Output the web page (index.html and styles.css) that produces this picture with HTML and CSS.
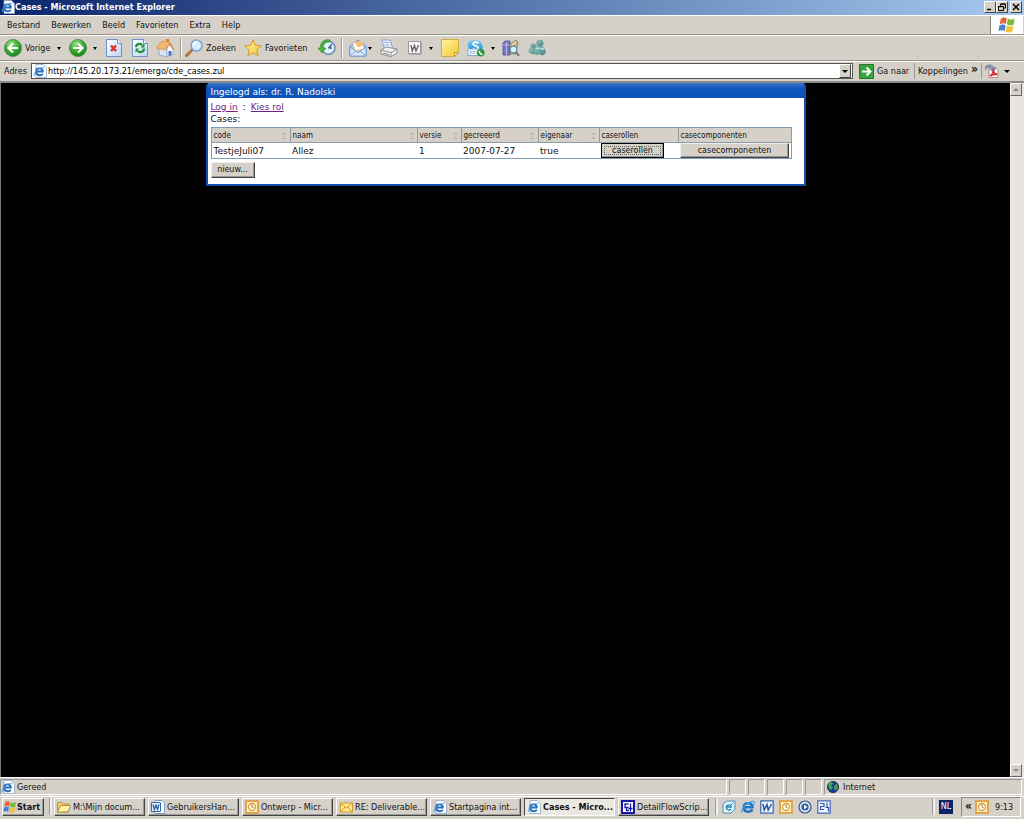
FILE: index.html
```html
<!DOCTYPE html>
<html lang="nl">
<head>
<meta charset="utf-8">
<title>Cases - Microsoft Internet Explorer</title>
<link rel="stylesheet" href="styles.css">
</head>
<body>
<svg class="sprite" aria-hidden="true">
  <defs>
    <radialGradient id="green" cx=".4" cy=".25" r=".8"><stop offset="0" stop-color="#9be08a"/><stop offset=".5" stop-color="#3fae35"/><stop offset="1" stop-color="#16801a"/></radialGradient>
    <linearGradient id="paper" x2="1" y2="1"><stop offset="0" stop-color="#fff"/><stop offset="1" stop-color="#b9d6f5"/></linearGradient>
    <linearGradient id="yellow" x2="1" y2="1"><stop offset="0" stop-color="#fff6a8"/><stop offset="1" stop-color="#f3c630"/></linearGradient>
    <linearGradient id="sky" x2="0" y2="1"><stop offset="0" stop-color="#7fd3f7"/><stop offset="1" stop-color="#1a86d0"/></linearGradient>
    <linearGradient id="teal" x2="1" y2="1"><stop offset="0" stop-color="#9fd0c0"/><stop offset="1" stop-color="#3d8085"/></linearGradient>
  </defs>
  <symbol id="back" viewBox="0 0 18 18"><circle cx="9" cy="9" r="8.5" fill="url(#green)" stroke="#2c7f2a" stroke-width=".7"/><path d="M14 9H5M9 4.5 4.5 9 9 13.500" fill="none" stroke="#fff" stroke-width="2.200"/></symbol>
  <symbol id="forward" viewBox="0 0 18 18"><circle cx="9" cy="9" r="8.500" fill="url(#green)" stroke="#2c7f2a" stroke-width=".7"/><path d="M4 9h9M9 4.500 13.500 9 9 13.500" fill="none" stroke="#fff" stroke-width="2.200"/></symbol>
  <symbol id="stop" viewBox="0 0 16 18"><path d="M.5.5h11l4 4v13H.5z" fill="url(#paper)" stroke="#6b94c4"/><path d="M11.500.5v4h4" fill="#fff" stroke="#6b94c4"/><path d="m5 6.500 5 5.500m0-5.500L5 12" stroke="#e0322a" stroke-width="2.500"/></symbol>
  <symbol id="refresh" viewBox="0 0 16 18"><path d="M.5.5h11l4 4v13H.5z" fill="url(#paper)" stroke="#6b94c4"/><path d="M11.500.5v4h4" fill="#fff" stroke="#6b94c4"/><path d="M4 8c0-3 4-4 6-2M12 9.500c0 3.500-4 4.500-6.500 2.500" fill="none" stroke="#1d9138" stroke-width="2.200"/><path d="M8.500 8.500h4V4zM7 9.500H3.500V14z" fill="#1d9138"/></symbol>
  <symbol id="home" viewBox="0 0 18 18"><path d="M3 8v8l8 2V8z" fill="#d9e5f5" stroke="#7e9cc6" stroke-width=".7"/><path d="m11 9 3-4 3 4v6l-6 3z" fill="#f8fbff" stroke="#7e9cc6" stroke-width=".7"/><path d="M12.500 12h3v4l-3 1.300z" fill="#4e72b4"/><path d="M0 9 6 2l8 1-5 8z" fill="#f3b671" stroke="#d08a3d" stroke-width=".7"/><path d="m14 3 4 7-1 .8-4-5z" fill="#d98a55"/><path d="M10 0h3v3l-3-.4z" fill="#d6863d"/></symbol>
  <symbol id="search" viewBox="0 0 18 18"><path d="m1.500 16.500 5.500-5.500" stroke="#9b6a37" stroke-width="3" stroke-linecap="round"/><path d="m1.500 16 5-5" stroke="#dda35c" stroke-width="1"/><circle cx="11.500" cy="6.500" r="5.500" fill="#d9efff" stroke="#7ca4d4" stroke-width="1.600"/><path d="M8 6c.5-2 2-3 4-3" fill="none" stroke="#fff" stroke-width="1.500"/></symbol>
  <symbol id="star" viewBox="0 0 18 18"><path d="m9 .8 2.300 5.500 6 .5-4.500 4 1.400 6L9 13.700 3.800 16.800l1.400-6-4.500-4 6-.5z" fill="url(#yellow)" stroke="#d49a20"/></symbol>
  <symbol id="history" viewBox="0 0 18 18"><circle cx="10.500" cy="8.800" r="6.500" fill="#e4f2fb" stroke="#7199bf" stroke-width="1.800"/><path d="M10.500 9 14 5M10.500 9H14" stroke="#355c86" stroke-width="1.300"/><path d="M12 1C5.500-.5 2 4 2.500 9H0l4 5 4-5H5.500C5 5 8 2 12 3z" fill="#49b53c" stroke="#258527" stroke-width=".6"/></symbol>
  <symbol id="mail" viewBox="0 0 18 18"><path d="M1 7 9 1l8 6v10H1z" fill="#a9cdf4" stroke="#6b95cc"/><path d="M3.500 4 13 2l2 8-9 2z" fill="#fffdf0" stroke="#d5a266" stroke-width=".6"/><circle cx="10" cy="5" r="3" fill="#f4bb73"/><path d="m1 8 8 6 8-6v9H1z" fill="#d8ebff" stroke="#6b95cc" stroke-width=".8"/><path d="m1 17 6-5m10 5-6-5" stroke="#6b95cc" stroke-width=".8"/></symbol>
  <symbol id="print" viewBox="0 0 18 18"><path d="m4 9-2-8h8l3 9z" fill="#e4f0ff" stroke="#7695c5" stroke-width=".8"/><path d="M4 3.500h5M4.500 6h5" stroke="#9eb6dd"/><path d="m1 11 5-3 11 2v4l-6 3.500L1 15z" fill="#efefed" stroke="#77787c" stroke-width=".8"/><path d="m1 11 10 2.500 6-3.500M11 13.500v4M3 14l6 1.500" fill="none" stroke="#77787c" stroke-width=".8"/></symbol>
  <symbol id="edit" viewBox="0 0 14 14"><path d="M.5.5h12v12H.5z" fill="#fafafa" stroke="#999"/><path d="M1 13.500h12.500V1" fill="none" stroke="#aaa"/><path d="m3 4 1.300 6L6.500 4.500 8 10l2.500-6" fill="none" stroke="#666" stroke-width="1.400"/></symbol>
  <symbol id="note" viewBox="0 0 18 18"><path d="M.5.5h17v13l-4 4H.5z" fill="url(#yellow)" stroke="#d2ab39"/><path d="M17.500 13.500h-4v4z" fill="#fff5b0" stroke="#c99d2b"/></symbol>
  <symbol id="skype" viewBox="0 0 19 18"><path d="M4 1c3-1 10-1 12 4 1 3 1 5-1 8L3 10C0 8 0 3 4 1z" fill="url(#sky)"/><path d="M12 4C9 2 6 3 6.500 5s5 1.500 5.500 4-4 2.500-6 .5" fill="none" stroke="#fff" stroke-width="1.800"/><path d="M1 10h11v7H1z" fill="#f5faff" stroke="#76a4ca"/><path d="M3 12.500h7m-7 2h7" stroke="#819db5" stroke-dasharray="2 1"/><circle cx="14.500" cy="14" r="4" fill="#249734"/><path d="M13 12c0 2 1 3.500 3.500 4" stroke="#fff" stroke-width="1.500" fill="none"/></symbol>
  <symbol id="research" viewBox="0 0 18 18"><path d="m1 4 2-2h5v14H1z" fill="#7476c4" stroke="#484993" stroke-width=".7"/><path d="M4.500 3v13M1 6h7" stroke="#babaf0"/><path d="m8 5 6-4 2 2-2 12H8z" fill="#c5b786" stroke="#73704d" stroke-width=".7"/><path d="m10 6 4-3" stroke="#fff8cc"/><circle cx="11.500" cy="10.500" r="3.300" fill="#d8f4ff" stroke="#6a8fa3" stroke-width="1.200"/><path d="m14 13 3 4" stroke="#6d6d70" stroke-width="2"/></symbol>
  <symbol id="messenger" viewBox="0 0 19 18"><g fill="url(#teal)" stroke="#4d8a86" stroke-width=".5"><circle cx="5.500" cy="7" r="2.600"/><path d="M1 13c-.5-5 8-6 9 0-1 3-8 3-9 0z"/><circle cx="12.500" cy="4" r="3.500"/><path d="M6.500 14C6 6 10 6.500 12 8c2-1.500 6 0 6.500 6-2 4-6 2-6.500 1-1 1-4 2-5.500-1z"/></g><path d="M9 10c1-1.500 2.500-1 3 0m1.500 0c1-1 2.500-.5 3 1" stroke="#d4ebe8" fill="none" stroke-width="1.200"/></symbol>
  <symbol id="ie" viewBox="0 0 14 14"><path d="M3 .5h7.500l3 3v10H3z" fill="#fff" stroke="#8ea5c4" stroke-width=".8"/><path d="M9.800 9.700C8 12.500 3 11.500 3.100 7.500 3.200 3.500 9.700 3.200 9.800 7.500H4" fill="none" stroke="#246dba" stroke-width="1.900"/><path d="M1.500 12C0 9 6 3 11.500 3.200" fill="none" stroke="#4d9fe2" stroke-width=".9"/></symbol>
  <symbol id="globe-ie" viewBox="0 0 14 14"><path d="M11.500 9.500C9 13.500 2.500 12 2.700 7.200 3 2 11.300 2 11.500 7.200H4" fill="none" stroke="#1c77c9" stroke-width="2.500"/><path d="M1 13C-1 9 7 1 13 1.500c1 1 .5 2 0 3" fill="none" stroke="#4aa6e8" stroke-width="1.200"/></symbol>
  <symbol id="windows" viewBox="0 0 16 16"><path d="M2.500 2.500C4.500 1 6 1.200 7.800 2L7 7.200c-1.700-1-3.500-.8-5.500.3z" fill="#ea6134"/><path d="M8.800 2.500c2 1 3.800 1 6-.2l-.9 5.300c-2 1-4 1-6 0z" fill="#79ba3c"/><path d="M1.300 8.500c2-1.200 3.700-1.300 5.500-.3L6 13.300c-2-1-3.600-.8-5.500.3z" fill="#4682d2"/><path d="M7.700 8.700c2 1 4 1 6-.1l-.9 5.200c-2 1.200-4 1.100-6 .1z" fill="#f4c237"/></symbol>
  <symbol id="go" viewBox="0 0 15 15"><path d="M.5.5h14v14H.5z" fill="#36a43b" stroke="#28772d"/><path d="M3 7.500h8M7.500 3.500l4 4-4 4" fill="none" stroke="#fff" stroke-width="1.900"/></symbol>
  <symbol id="pdf" viewBox="0 0 14 14"><path d="M4 3h6l3 3v7.500H4z" fill="#fff" stroke="#a06a75" stroke-width=".7"/><path d="M0 3c3-3 7-3 9 1h2L8 8 4.500 5H6C4 3 2 3 0 6z" fill="#8a94b8" stroke="#5b6690" stroke-width=".5"/><path d="M5 12c3-2 4-5 3.500-6.500S7 9 12.500 10.500C9 10 7 10.500 5 12z" fill="none" stroke="#d12b36" stroke-width="1.600"/></symbol>
  <symbol id="folder" viewBox="0 0 14 14"><path d="M.5 3V12h11V4H6L4.500 2.500H1z" fill="#f5cf62" stroke="#b58f3b"/><path d="m.5 12 3-6.500h10L11 12z" fill="#fff0a4" stroke="#b58f3b"/></symbol>
  <symbol id="worddoc" viewBox="0 0 14 14"><path d="M4 .5h7l2.500 2.500v10.500H4z" fill="#fff" stroke="#7f9cc6"/><path d="M.5 2.500h9v9h-9z" fill="#e6effb" stroke="#3868aa"/><path d="m2 4.500 1.300 5L5 5l1.500 4.500 1.500-5" fill="none" stroke="#2157a4" stroke-width="1.200"/></symbol>
  <symbol id="word" viewBox="0 0 14 14"><path d="M.8.800h12.400v12.400H.8z" fill="#edf4ff" stroke="#3864aa" stroke-width="1.200"/><path d="m3 4 1.200 6L7 4.500 8.200 10 11.500 4" fill="none" stroke="#2555a4" stroke-width="1.500"/></symbol>
  <symbol id="outlook" viewBox="0 0 14 14"><path d="M1 1h12v12H1z" fill="#fff1c0" stroke="#e0a450" stroke-width="2"/><circle cx="7" cy="7" r="3.500" fill="#fffdf0" stroke="#d99a40" stroke-width="1.300"/><path d="M7 4.500V7l1.700 1" fill="none" stroke="#a56619"/></symbol>
  <symbol id="envelope" viewBox="0 0 14 14"><path d="M1.500 3h12v9h-12z" fill="#ffe98a" stroke="#cf9c29"/><path d="m1.500 3 6 5 6-5M2 12l4-5m7 5L9 7" fill="none" stroke="#cf9c29"/></symbol>
  <symbol id="flow" viewBox="0 0 14 14"><path d="M1 1h12v12H1z" fill="#fff" stroke="#1717aa" stroke-width="2"/><path d="M7.500 4H4v3.500h3.500M5.500 7.500V10.500H8M9.500 3.500v5M7.500 8.500h4M9.500 8.500v3" fill="none" stroke="#1717aa" stroke-width="1.300"/></symbol>
  <symbol id="desktop" viewBox="0 0 14 14"><path d="m1 4 4-3h8v8l-4 4H1z" fill="#e8f5fc" stroke="#468fb5"/><path d="M9 9C7 11 4 9.500 4.300 7 4.600 4 9.500 4.300 9.300 7H5" fill="none" stroke="#2d86b8" stroke-width="1.400"/><path d="m8 6 3.500-3.500" stroke="#398ab1"/></symbol>
  <symbol id="media" viewBox="0 0 14 14"><circle cx="7" cy="7" r="6" fill="#d9e7f8" stroke="#36588d" stroke-width="1.200"/><circle cx="7" cy="7" r="3.600" fill="#385a94"/><path d="m6 4.800 3.500 2.200L6 9.200z" fill="#fff"/></symbol>
  <symbol id="visio" viewBox="0 0 14 14"><path d="M.8.800h12.400v12.400H.8z" fill="#eef3ff" stroke="#4766b3" stroke-width="1.200"/><path d="M3 3.500h4v3H3.500v3H7M10 2.500v5M8.500 7.500h3v4" fill="none" stroke="#3157ab" stroke-width="1.200"/></symbol>
  <symbol id="world" viewBox="0 0 12 12"><circle cx="6" cy="6" r="5.500" fill="#173e9b" stroke="#142b54"/><path d="M1.500 3C4 0 6 1 6 2.500L4 5l2 1-2 3C2 8 1 6 1.500 3zM7.500 4 10 3l1 4-2.500 3L7 7z" fill="#44a74f"/></symbol>
</svg>

<div class="desktop">
  <header class="titlebar">
    <svg class="icon14"><use href="#ie"/></svg>
    <h1>Cases - Microsoft Internet Explorer</h1>
    <div class="winbuttons">
      <button class="winbtn" aria-label="Minimaliseren"><svg viewBox="0 0 8 8"><path d="M1 6.500h4" stroke="#000" stroke-width="1.500"/></svg></button>
      <button class="winbtn" aria-label="Herstellen"><svg viewBox="0 0 8 8"><path d="M2.500 3V1h5v4h-2M.5 3.500h5v4h-5zM2.500 1.200h5M.5 3.700h5" fill="none" stroke="#000"/></svg></button>
      <button class="winbtn closebtn" aria-label="Sluiten"><svg viewBox="0 0 8 8"><path d="m1 1 6 6m0-6L1 7" stroke="#000" stroke-width="1.500"/></svg></button>
    </div>
  </header>

  <nav class="menubar">
    <button>Bestand</button><button>Bewerken</button><button>Beeld</button><button>Favorieten</button><button>Extra</button><button>Help</button>
    <span class="brand"><svg class="icon18"><use href="#windows"/></svg></span>
  </nav>

  <div class="toolbar">
    <button><svg class="icon18"><use href="#back"/></svg>Vorige</button>
    <button class="drop" aria-label="Vorige pagina's"></button>
    <button aria-label="Volgende"><svg class="icon18"><use href="#forward"/></svg></button>
    <button class="drop" aria-label="Volgende pagina's"></button>
    <button aria-label="Stoppen"><svg class="page"><use href="#stop"/></svg></button>
    <button aria-label="Vernieuwen"><svg class="page"><use href="#refresh"/></svg></button>
    <button aria-label="Startpagina"><svg class="icon18"><use href="#home"/></svg></button>
    <span class="sep"></span>
    <button><svg class="icon18"><use href="#search"/></svg>Zoeken</button>
    <button><svg class="icon18"><use href="#star"/></svg>Favorieten</button>
    <button aria-label="Geschiedenis"><svg class="icon18"><use href="#history"/></svg></button>
    <span class="sep"></span>
    <button aria-label="E-mail"><svg class="icon18"><use href="#mail"/></svg></button>
    <button class="drop" aria-label="E-mailopties"></button>
    <button aria-label="Afdrukken"><svg class="icon18"><use href="#print"/></svg></button>
    <button aria-label="Bewerken met Word"><svg class="icon14"><use href="#edit"/></svg></button>
    <button class="drop" aria-label="Bewerkopties"></button>
    <button aria-label="Discussiëren"><svg class="icon18"><use href="#note"/></svg></button>
    <button aria-label="Skype"><svg class="icon18"><use href="#skype"/></svg></button>
    <button class="drop" aria-label="Skype-opties"></button>
    <button aria-label="Onderzoek"><svg class="icon18"><use href="#research"/></svg></button>
    <button aria-label="Messenger"><svg class="icon18"><use href="#messenger"/></svg></button>
  </div>

  <div class="addressbar">
    <label for="address">Adres</label>
    <div class="address">
      <svg class="icon14"><use href="#ie"/></svg>
      <input id="address" type="text" value="http://145.20.173.21/emergo/cde_cases.zul">
      <button class="combo drop" aria-label="Adreslijst"></button>
    </div>
    <button class="go"><svg class="icon15"><use href="#go"/></svg>Ga naar</button>
    <button class="links">Koppelingen <b>»</b></button>
    <button class="pdf" aria-label="PDF"><svg class="icon14"><use href="#pdf"/></svg><span class="drop"></span></button>
  </div>

  <div class="viewport">
    <main class="page-area">
      <section class="window">
        <h2>Ingelogd als: dr. R. Nadolski</h2>
        <div class="window-body">
          <p><a href="#">Log in</a><span class="colon">:</span><a href="#">Kies rol</a></p>
          <p>Cases:</p>
          <table class="cases">
            <colgroup><col class="c-code"><col class="c-naam"><col class="c-versie"><col class="c-date"><col class="c-owner"><col class="c-roles"><col></colgroup>
            <thead><tr><th class="sort">code</th><th class="sort">naam</th><th class="sort">versie</th><th class="sort">gecreeerd</th><th class="sort">eigenaar</th><th>caserollen</th><th>casecomponenten</th></tr></thead>
            <tbody><tr><td>TestjeJuli07</td><td>Allez</td><td>1</td><td>2007-07-27</td><td>true</td><td><button class="btn roles">caserollen</button></td><td><button class="btn components">casecomponenten</button></td></tr></tbody>
          </table>
          <button class="btn new">nieuw...</button>
        </div>
      </section>
    </main>
    <div class="scrollbar"><button class="up" aria-label="Omhoog"></button><button class="down" aria-label="Omlaag"></button></div>
  </div>

  <footer class="statusbar">
    <div class="status-main"><svg class="icon14"><use href="#ie"/></svg>Gereed</div>
    <span class="cell"></span><span class="cell"></span><span class="cell"></span><span class="cell"></span><span class="cell"></span>
    <div class="zone"><svg class="icon12"><use href="#world"/></svg>Internet</div>
  </footer>

  <nav class="taskbar">
    <button class="task start"><svg class="icon14"><use href="#windows"/></svg>Start</button>
    <span class="grip"></span>
    <div class="tasks">
      <button class="task"><svg class="icon14"><use href="#folder"/></svg>M:\Mijn docum...</button>
      <button class="task"><svg class="icon14"><use href="#worddoc"/></svg>GebruikersHan...</button>
      <button class="task"><svg class="icon14"><use href="#outlook"/></svg>Ontwerp - Micr...</button>
      <button class="task"><svg class="icon14"><use href="#envelope"/></svg>RE: Deliverable...</button>
      <button class="task"><svg class="icon14"><use href="#ie"/></svg>Startpagina int...</button>
      <button class="task active"><svg class="icon14"><use href="#ie"/></svg>Cases - Micro...</button>
      <button class="task"><svg class="icon14"><use href="#flow"/></svg>DetailFlowScrip...</button>
    </div>
    <span class="grip"></span>
    <div class="quick">
      <svg class="icon14"><use href="#desktop"/></svg><svg class="icon14"><use href="#globe-ie"/></svg><svg class="icon14"><use href="#word"/></svg><svg class="icon14"><use href="#outlook"/></svg><svg class="icon14"><use href="#media"/></svg><svg class="icon14"><use href="#visio"/></svg>
    </div>
    <span class="grip tray-grip"></span>
    <span class="lang">NL</span>
    <div class="tray"><b>«</b><svg class="icon14"><use href="#outlook"/></svg><time>9:13</time></div>
  </nav>
</div>
</body>
</html>
```
FILE: styles.css
```css
* { box-sizing: border-box; }
body {
  margin: 0;
  font: 9px/12px "DejaVu Sans Condensed", "DejaVu Sans", sans-serif;
  font-stretch: condensed;
  color: #111;
  background: #d6d1c8;
}
button {
  font: inherit;
  color: inherit;
  background: none;
  border: 0;
  padding: 0;
  white-space: nowrap;
}
h1, h2, p { margin: 0; font-size: inherit; }
svg { flex: none; display: block; }
.sprite { position: absolute; width: 0; height: 0; }
.icon12 { width: 12px; height: 12px; }
.icon14 { width: 14px; height: 14px; }
.icon15 { width: 15px; height: 15px; }
.icon18 { width: 18px; height: 18px; }
.page { width: 16px; height: 18px; }

.desktop { display: flex; flex-direction: column; height: 100vh; }

.titlebar {
  display: flex;
  align-items: center;
  height: 15px;
  padding: 0 2px 1px 1px;
  color: #fff;
  background: linear-gradient(90deg, #0a246a, #a6caf0);
}
.titlebar h1 { font-weight: bold; flex: 1; }
.winbuttons { display: flex; }
.winbtn {
  display: grid;
  place-items: center;
  width: 12px;
  height: 12px;
  background: #d6d1c8;
  border: 1px solid;
  border-color: #fff #444 #444 #fff;
}
.winbtn svg { width: 8px; height: 8px; }
.closebtn { margin-left: 2px; }

.menubar {
  display: flex;
  align-items: center;
  gap: 11px;
  height: 20px;
  padding-left: 7px;
  border-top: 1px solid #fff;
  border-bottom: 1px solid #9a968e;
}
.brand {
  display: grid;
  place-items: center;
  align-self: stretch;
  width: 33px;
  margin-left: auto;
  margin-right: 1px;
  background: #fff;
  border-left: 1px solid #888;
}

.toolbar {
  display: grid;
  grid-template-columns: 53px 12px 24px 13px 26px 24px 24px 5px 59px 74px 23px 8px 19px 12px 28px 21px 12px 26px 24px 11px 26px 24px;
  align-items: center;
  height: 26px;
  padding-left: 4px;
  border-top: 1px solid #fff;
  border-bottom: 1px solid #9a968e;
}
.toolbar button { display: flex; align-items: center; gap: 3px; }
.drop::before {
  content: "";
  display: block;
  border: 3px solid transparent;
  border-top-color: #000;
  border-bottom: 0;
}
.toolbar .drop::before { border-width: 3px 2px 0; }
.sep { width: 2px; height: 20px; border-left: 1px solid #999; border-right: 1px solid #fff; }

.addressbar {
  display: flex;
  align-items: center;
  height: 22px;
  padding: 1px 2px 2px 4px;
  border-top: 1px solid #fff;
  border-bottom: 2px solid #8b8b8b;
}
.addressbar label { width: 27px; }
.address {
  display: flex;
  flex: 1;
  align-items: center;
  align-self: stretch;
  padding: 0 1px;
  background: #fff;
  border: 1px solid #555;
}
.address input {
  flex: 1;
  min-width: 0;
  padding: 0 0 0 1px;
  font: inherit;
  color: #000;
  background: none;
  border: 0;
  outline: 0;
}
.combo {
  display: grid;
  place-items: center;
  align-self: stretch;
  width: 12px;
  background: #d6d1c8;
  border: 1px solid;
  border-color: #fff #444 #444 #fff;
}
.go { display: flex; align-items: center; gap: 3px; width: 61px; padding-left: 6px; }
.links, .pdf {
  display: flex;
  align-items: center;
  align-self: stretch;
  padding-left: 3px;
  border-left: 1px solid #999;
}
.links { width: 67px; gap: 3px; }
.links b { font-size: 12px; padding-bottom: 5px; }
.pdf { width: 41px; gap: 5px; padding-left: 3px; }

.viewport { display: flex; flex: 1; min-height: 0; border-left: 1px solid #777; }
.page-area { flex: 1; background: #000; }
.window {
  max-width: 600px;
  margin: 0 auto;
  background: #fff;
  border: solid #124fae;
  border-width: 0 2px 2px;
  border-radius: 4px 4px 0 0;
  font: 9px/12px "DejaVu Sans", sans-serif;
}
.window h2 {
  height: 15px;
  padding: 3px 3px 0;
  font-weight: normal;
  line-height: 12px;
  color: #fff;
  background: linear-gradient(#3b78c6, #0f56bd 40%, #0c52b8);
}
.window-body { padding: 3px 12px 6px 3px; }
.window p { line-height: 12px; }
.window a { color: #702080; }
.colon { padding: 0 5px; }
.cases {
  width: 100%;
  margin: 2px 0 3px;
  table-layout: fixed;
  border-collapse: collapse;
  border: 1px solid #7f9db9;
}
.c-code { width: 79px; }
.c-naam { width: 127px; }
.c-versie { width: 44px; }
.c-date { width: 77px; }
.c-owner { width: 61px; }
.c-roles { width: 79px; }
.cases th {
  height: 15px;
  padding: 1px 2px 0;
  font: 8px/12px "DejaVu Sans Condensed", "DejaVu Sans", sans-serif;
  font-stretch: condensed;
  text-align: left;
  background: #d6d1c8;
  border: 1px solid #8f9ca6;
  border-width: 0 0 1px 1px;
}
.cases .sort {
  background: conic-gradient(from 135deg at 50% 0, #c0bcb4 90deg, transparent 0) right 3px top 8px / 5px 3px no-repeat,
    conic-gradient(from 135deg at 50% 0, #c0bcb4 90deg, transparent 0) right 3px top 4px / 5px 3px no-repeat,
    #d6d1c8;
}
.cases td { height: 16px; padding: 0 2px; }
.btn {
  display: block;
  height: 15px;
  font-size: 8px;
  background: #d6d1c8;
  border: 1px solid;
  border-color: #eee #444 #444 #eee;
  box-shadow: inset -1px -1px #999;
}
.roles { width: 63px; border-color: #000; outline: 1px dotted #666; outline-offset: -4px; }
.components { width: 109px; }
.new { width: 44px; height: 16px; }

.scrollbar {
  display: flex;
  flex-direction: column;
  justify-content: space-between;
  width: 14px;
  padding-right: 2px;
  background: #e8e5df;
}
.scrollbar button {
  display: grid;
  place-items: center;
  height: 13px;
  background: #d6d1c8;
  border: 1px solid;
  border-color: #fff #666 #666 #fff;
}
.scrollbar button::before { content: ""; border: 3px solid transparent; }
.scrollbar .up::before { border-top: 0; border-bottom-color: #888; }
.scrollbar .down::before { border-bottom: 0; border-top-color: #888; }

.statusbar {
  display: flex;
  gap: 2px;
  height: 19px;
  padding: 1px 2px 1px 0;
  border-top: 1px solid #fff;
}
.status-main, .cell, .zone {
  display: flex;
  align-items: center;
  gap: 2px;
  border: 1px solid;
  border-color: #999 #fff #fff #999;
}
.status-main { flex: 1; }
.cell { width: 17px; }
.zone { width: 198px; gap: 4px; padding-left: 2px; }

.taskbar {
  display: flex;
  align-items: center;
  height: 23px;
  padding: 0 3px 3px 2px;
  border-top: 1px solid #fff;
}
.task {
  display: flex;
  align-items: center;
  gap: 2px;
  width: 91px;
  height: 18px;
  padding-left: 2px;
  background: #d6d1c8;
  border: 1px solid;
  border-color: #fff #444 #444 #fff;
  box-shadow: inset -1px -1px #999;
}
.start { width: 42px; padding-left: 0; gap: 0; font-weight: bold; }
.active {
  font-weight: bold;
  background: #ebe8e2;
  border-color: #444 #fff #fff #444;
  box-shadow: none;
}
.grip { width: 3px; height: 17px; margin: 0 2px 0 5px; border-left: 1px solid #999; border-right: 2px solid #eee; }
.tasks { display: flex; gap: 3px; margin-right: 1px; }
.quick { display: flex; gap: 5px; padding-left: 2px; }
.tray-grip { margin-left: auto; }
.lang {
  width: 14px;
  height: 14px;
  margin: 0 8px 0 2px;
  text-align: center;
  color: #fff;
  background: #0a246a;
}
.tray {
  display: flex;
  align-items: center;
  gap: 3px;
  width: 60px;
  height: 20px;
  padding-left: 3px;
  border: 1px solid;
  border-color: #888 #fff #fff #888;
}
.tray b { font-size: 12px; padding-bottom: 1px; }
.tray time { margin-left: 3px; }
```
